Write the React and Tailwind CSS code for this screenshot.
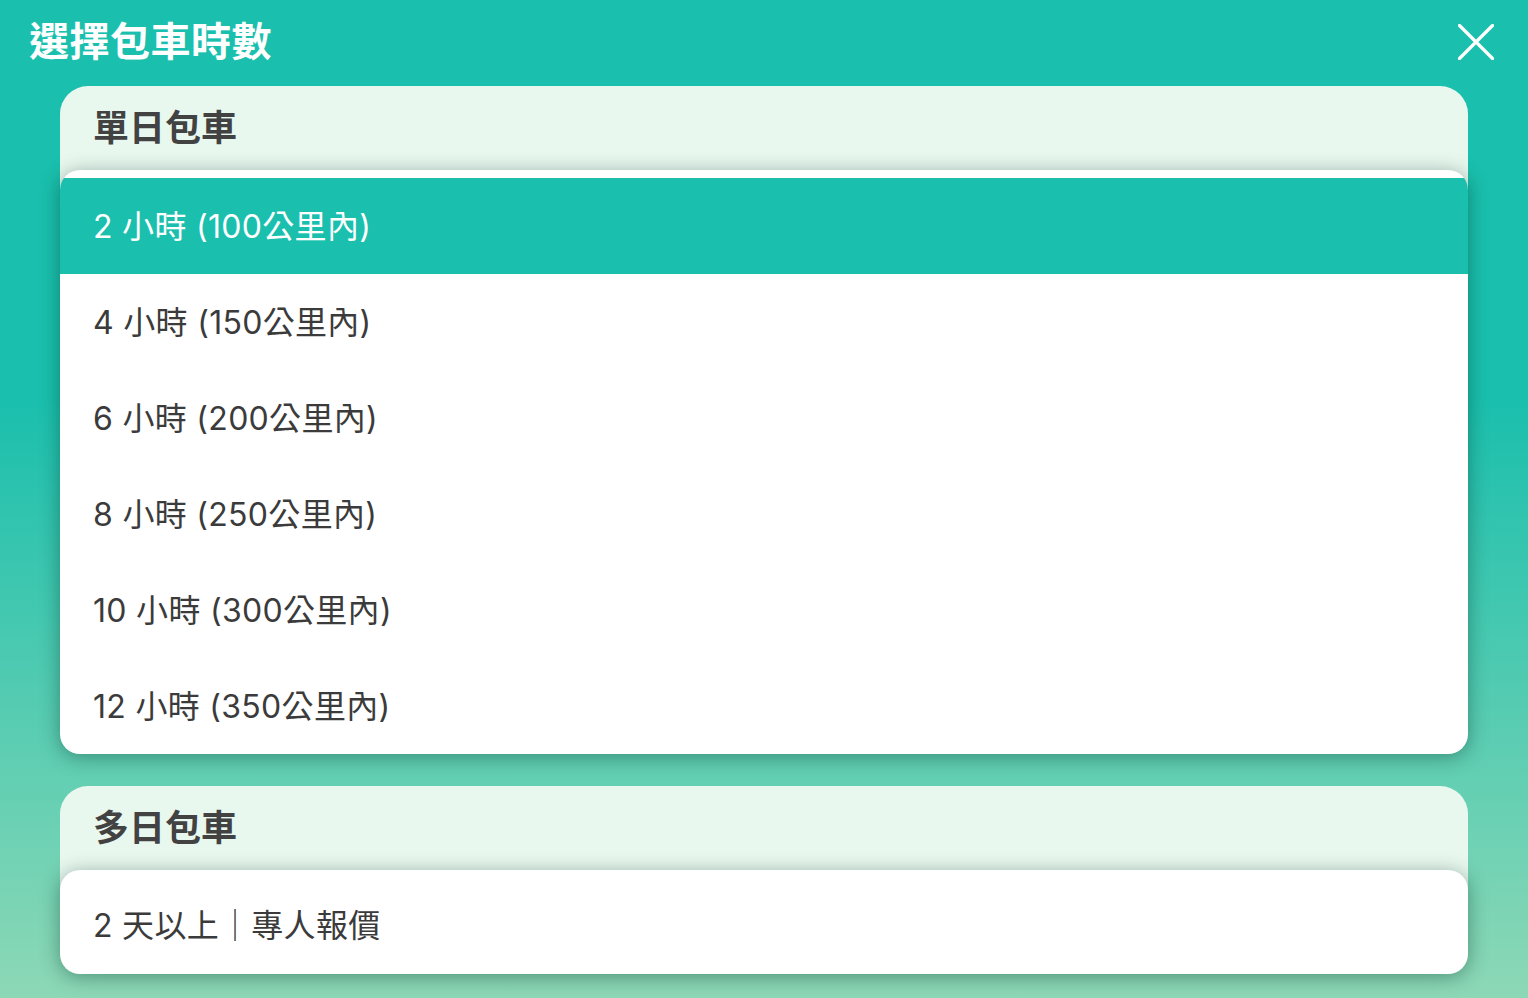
import { useState } from "react";

const singleDay = [
  "2 小時 (100公里內)",
  "4 小時 (150公里內)",
  "6 小時 (200公里內)",
  "8 小時 (250公里內)",
  "10 小時 (300公里內)",
  "12 小時 (350公里內)",
];

function Section({ title, children }) {
  return (
    <div className="rounded-[28px] bg-[linear-gradient(to_bottom,#e8f8ef_0%,#e8f8ef_45%,#d9e9e1_100%)]">
      <div className="h-[84px] flex items-center px-[33px]">
        <h2 className="text-[36px] font-bold text-[#424242] leading-none">{title}</h2>
      </div>
      <div className="bg-white rounded-[20px] overflow-hidden shadow-[0_3px_20px_rgba(0,40,30,0.4)]">
        {children}
      </div>
    </div>
  );
}

export default function App() {
  const [selected, setSelected] = useState(0);

  return (
    <div
      className="w-[1528px] h-[998px] overflow-hidden bg-[linear-gradient(to_bottom,#1abfad_0%,#1abfad_40%,#8dd8b6_100%)] flex flex-col"
      style={{ fontFamily: '"Inter", "Noto Sans CJK TC", sans-serif' }}
    >
      {/* 標題列 */}
      <div className="h-[86px] flex items-start justify-between pl-[29px] pr-[34px] pt-[16px]">
        <h1 className="text-[40px] font-bold text-white leading-[52px] tracking-[0.5px]">選擇包車時數</h1>
        <button className="mt-[8px] w-[36px] h-[36px] text-white">
          <svg viewBox="0 0 36 36" width="36" height="36" fill="none" stroke="currentColor" strokeWidth="3.2" strokeLinecap="round">
            <path d="M1.5 1.5L34.5 34.5M34.5 1.5L1.5 34.5" />
          </svg>
        </button>
      </div>

      <div className="px-[60px] flex flex-col gap-[32px]">
        <Section title="單日包車">
          <div className="pt-[8px]">
            {singleDay.map((item, i) => (
              <div
                key={i}
                onClick={() => setSelected(i)}
                className={`h-[96px] flex items-center px-[33px] pt-[2px] text-[32px] tracking-[0.3px] cursor-pointer ${
                  selected === i ? "bg-[#1abfad] text-white" : "text-[#3b3b3b]"
                }`}
              >
                {item}
              </div>
            ))}
          </div>
        </Section>

        <Section title="多日包車">
          <div className="h-[104px] flex items-center px-[33px] pt-[8px] text-[32px] tracking-[0.3px] text-[#3b3b3b]">
            2 天以上｜專人報價
          </div>
        </Section>
      </div>
    </div>
  );
}
